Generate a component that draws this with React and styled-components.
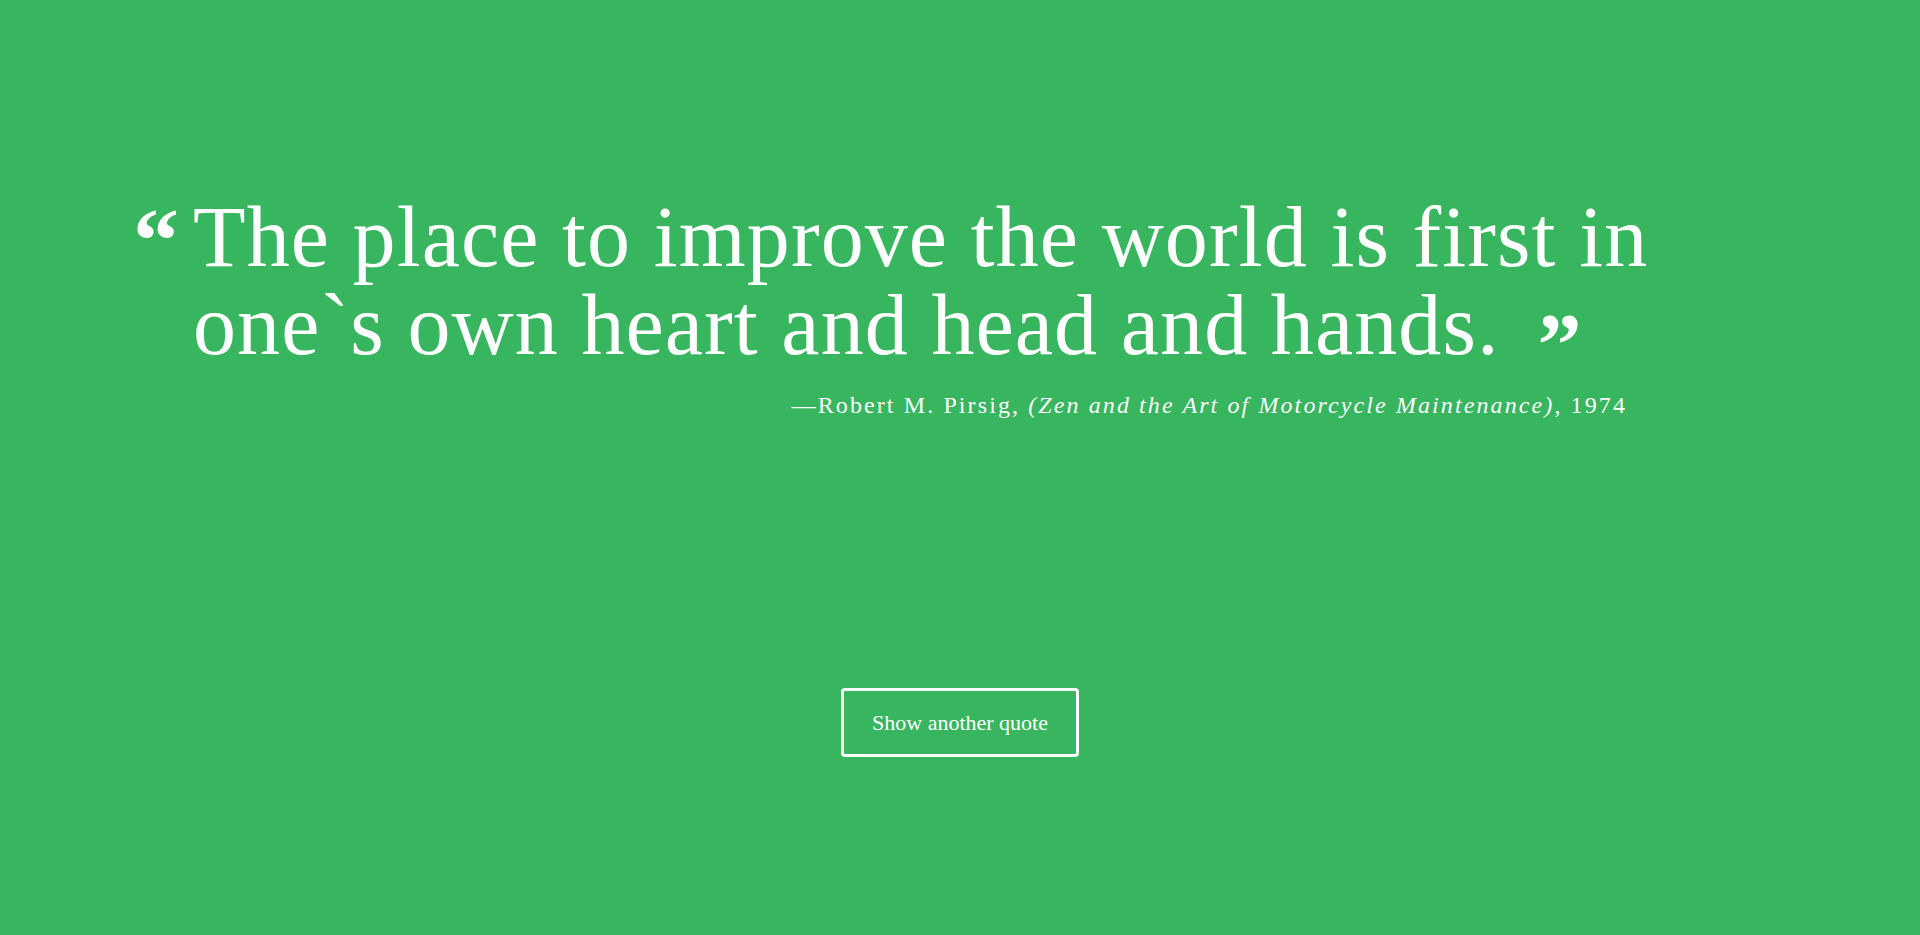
import React, { useState } from "react";
import styled, { createGlobalStyle } from "styled-components";

const quotes = [
  {
    text: "The place to improve the world is first in one`s own heart and head and hands.",
    author: "Robert M. Pirsig",
    book: "Zen and the Art of Motorcycle Maintenance",
    year: "1974",
  },
];

const GlobalStyle = createGlobalStyle`
  html, body {
    margin: 0;
    padding: 0;
    background: #38b55f;
  }
  body {
    font-family: "Liberation Serif", "DejaVu Serif", serif;
    color: #fff;
  }
`;

const Page = styled.div`
  min-height: 100vh;
  background: #38b55f;
  display: flex;
  flex-direction: column;
  align-items: center;
  padding-top: 193px;
  box-sizing: border-box;
`;

const Content = styled.div`
  width: 1644px;
  display: flex;
  flex-direction: column;
`;

const QuoteRow = styled.div`
  display: flex;
  align-items: flex-start;
`;

const OpenMark = styled.span`
  width: 60px;
  flex: none;
  margin-left: -5px;
  margin-top: 1px;
  font-weight: bold;
  font-size: 92px;
  line-height: 92px;
`;

const QuoteText = styled.blockquote`
  margin: 0;
  width: 1510px;
  font-size: 86px;
  line-height: 88px;
  letter-spacing: 1.1px;
  font-weight: normal;
`;

const CloseMark = styled.span`
  display: inline-block;
  height: 40px;
  line-height: 40px;
  vertical-align: -20px;
  margin-left: 38px;
  font-weight: bold;
  font-size: 88px;
`;

const Attribution = styled.p`
  margin: 21px 0 0;
  width: 1489px;
  text-align: right;
  font-size: 24px;
  line-height: 30px;
  letter-spacing: 2.1px;
`;

const Book = styled.em`
  font-style: italic;
`;

const Button = styled.button`
  margin-top: 268px;
  width: 238px;
  height: 69px;
  background: transparent;
  border: 3px solid #fff;
  border-radius: 4px;
  color: #fff;
  font-family: "Liberation Serif", serif;
  font-size: 22px;
  cursor: pointer;

  &:hover {
    background: rgba(255, 255, 255, 0.1);
  }
`;

export default function App() {
  const [index, setIndex] = useState(0);
  const q = quotes[index];

  return (
    <>
      <GlobalStyle />
      <Page>
        <Content>
          <QuoteRow>
            <OpenMark>“</OpenMark>
            <QuoteText>
              {q.text}
              <CloseMark>”</CloseMark>
            </QuoteText>
          </QuoteRow>
          <Attribution>
            —{q.author}, <Book>({q.book})</Book>, {q.year}
          </Attribution>
        </Content>
        <Button onClick={() => setIndex((index + 1) % quotes.length)}>
          Show another quote
        </Button>
      </Page>
    </>
  );
}
